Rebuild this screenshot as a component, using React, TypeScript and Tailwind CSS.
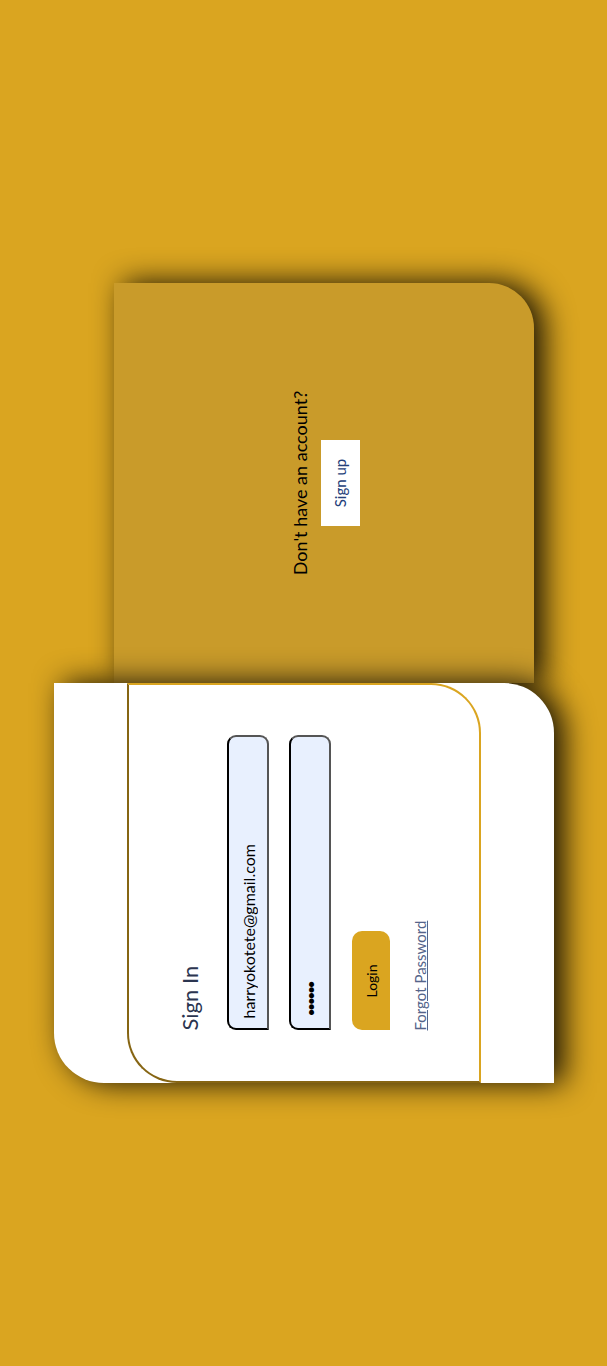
import React from "react";

const font = { fontFamily: "Lato, 'Liberation Sans', sans-serif" };

function SignInPanel() {
    return (
        <div className="relative z-10 flex h-[500px] w-[400px] shrink-0 items-center rounded-tl-[50px] rounded-br-[50px] bg-white shadow-[0_10px_30px_rgba(0,0,0,0.9)]">
            {/* inner outlined card */}
            <div className="h-[354px] w-full rounded-tl-[50px] rounded-br-[50px] border-2 border-[#daa520] [border-style:inset]">
                <div className="mx-auto flex w-[295px] flex-col items-start pt-[47px]">
                    <h1 className="text-[22px] leading-[28px] font-normal text-[#2b3550]">Sign In</h1>

                    <input
                        type="email"
                        readOnly
                        defaultValue="harryokotete@gmail.com"
                        className="mt-[23px] h-[42px] w-full rounded-[9px] rounded-bl-none border-2 border-t-black border-l-black border-r-[#555] border-b-[#555] bg-[#e8f0fe] pl-[10px] text-[16px] text-black outline-none"
                        style={font}
                    />
                    <input
                        type="password"
                        readOnly
                        defaultValue="123456"
                        className="mt-[20px] h-[42px] w-full rounded-[9px] rounded-bl-none border-2 border-t-black border-l-black border-r-[#555] border-b-[#555] bg-[#e8f0fe] pl-[12px] text-[14px] tracking-[-2.5px] text-black outline-none"
                        style={font}
                    />

                    <button className="mt-[21px] h-[38px] w-[99px] rounded-[10px] rounded-bl-none bg-[#daa520] text-[14px] text-black">
                        Login
                    </button>

                    <a href="#" className="mt-[20px] text-[15px] leading-[20px] text-[#55648a] underline">
                        Forgot Password
                    </a>
                </div>
            </div>
        </div>
    );
}

function SignUpPanel() {
    return (
        <div className="mb-5 flex h-[420px] w-[400px] shrink-0 flex-col items-center justify-center self-end rounded-br-[45px] bg-[#c99b2a] shadow-[0_10px_30px_rgba(0,0,0,0.9)]">
            <p className="text-[18px] leading-[24px] text-black">Don't have an account?</p>
            <button className="mt-[9px] h-[39px] w-[86px] bg-white text-[15px] text-[#24407a]">Sign up</button>
        </div>
    );
}

export default function App() {
    return (
        <div
            className="flex h-screen w-full items-center justify-center overflow-hidden bg-[#daa520]"
            style={font}
        >
            <div className="flex h-[500px] w-[800px] shrink-0 -rotate-90">
                <SignInPanel />
                <SignUpPanel />
            </div>
        </div>
    );
}
